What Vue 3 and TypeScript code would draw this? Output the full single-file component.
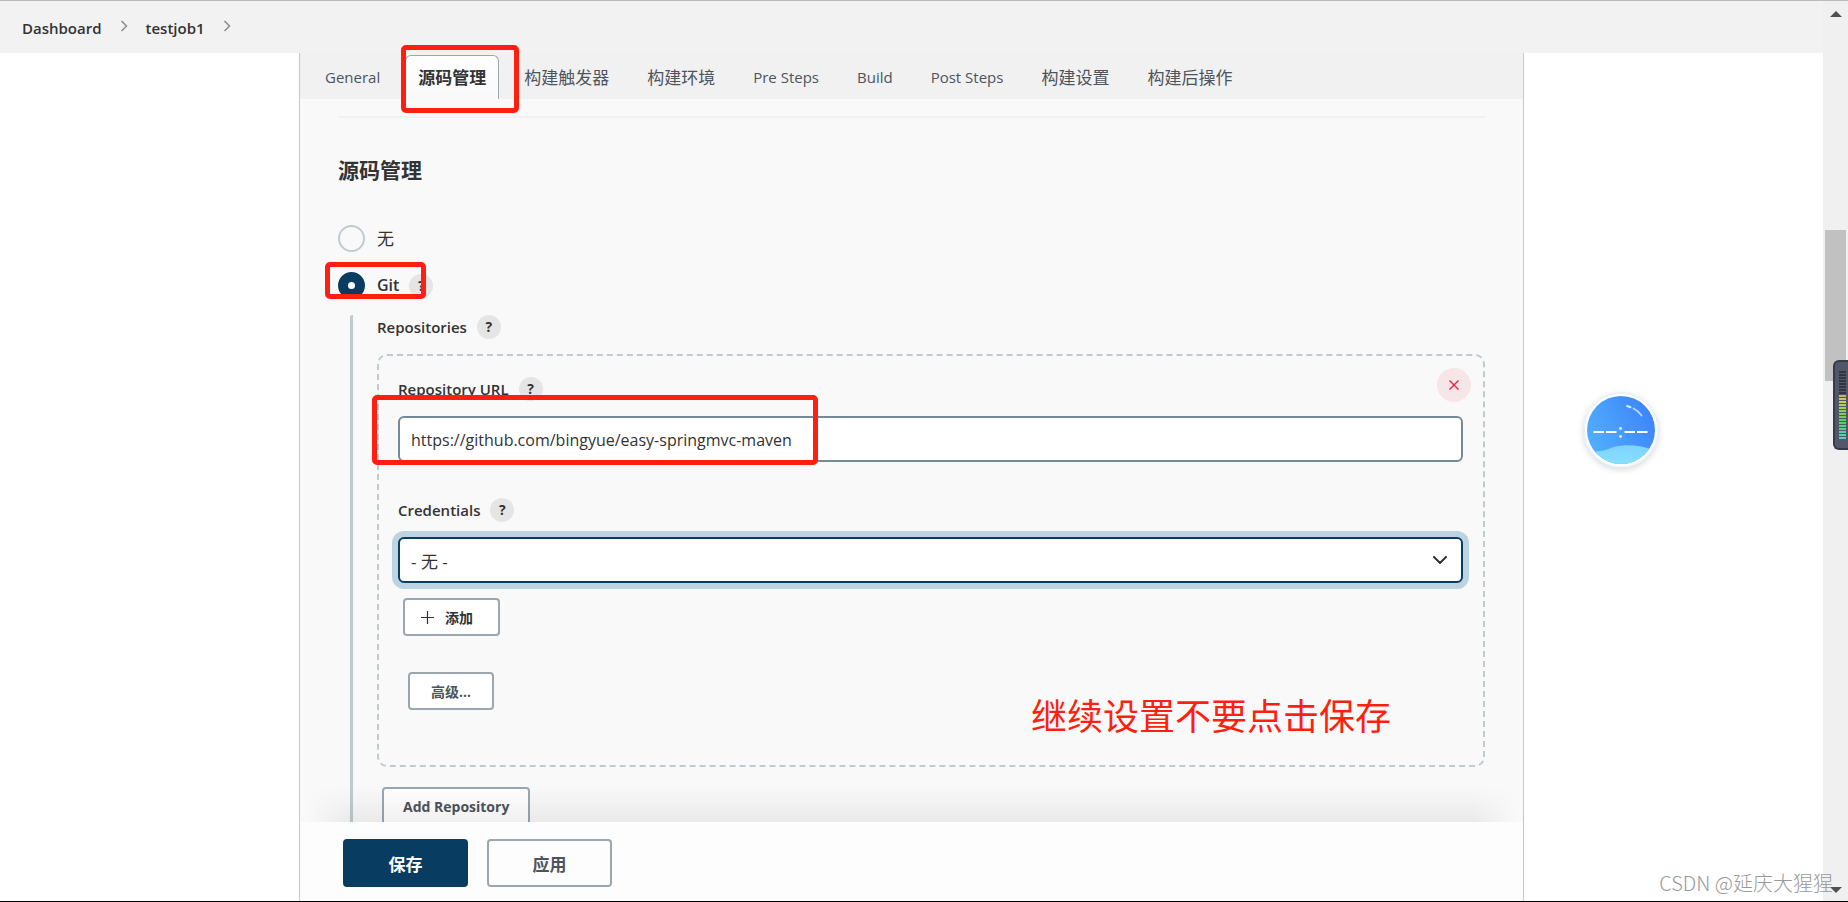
<script setup lang="ts">
import { ref } from 'vue'

interface Tab {
  label: string
  cjk: boolean
}

const tabs: Tab[] = [
  { label: 'General', cjk: false },
  { label: '源码管理', cjk: true },
  { label: '构建触发器', cjk: true },
  { label: '构建环境', cjk: true },
  { label: 'Pre Steps', cjk: false },
  { label: 'Build', cjk: false },
  { label: 'Post Steps', cjk: false },
  { label: '构建设置', cjk: true },
  { label: '构建后操作', cjk: true },
]
const activeTab = ref('源码管理')
const crumbs = ['Dashboard', 'testjob1']
const scm = ref('git')
const repositoryUrl = ref('https://github.com/bingyue/easy-springmvc-maven')
const credentials = ref('none')

const meterColor = (i: number): string =>
  i < 8 ? '#31353f' : `hsl(${46 + (i - 8) * 9}, 55%, 58%)`
const meter = Array.from({ length: 23 }, (_, i) => meterColor(i))
</script>

<template>
  <div class="screen">
    <div class="page">
      <header class="crumbs">
        <nav aria-label="Breadcrumb">
          <template v-for="c in crumbs" :key="c">
            <a href="#">{{ c }}</a>
            <svg class="crumb-arrow" viewBox="0 0 8 12" aria-hidden="true">
              <path d="M1.5 1 L6.5 6 L1.5 11" fill="none" stroke="#8c8c8c" stroke-width="1.5" />
            </svg>
          </template>
        </nav>
      </header>

      <main class="panel">
        <nav class="tabs">
          <button
            v-for="t in tabs"
            :key="t.label"
            type="button"
            class="tab"
            :class="{ cjk: t.cjk, active: t.label === activeTab }"
            @click="activeTab = t.label"
          >{{ t.label }}</button>
        </nav>

        <form id="config" class="form" @submit.prevent>
          <hr class="rule" />
          <h2 class="title">源码管理</h2>

          <div class="radio-row">
            <input id="scm-none" v-model="scm" type="radio" name="scm" value="none" />
            <label for="scm-none" class="plain">无</label>
          </div>
          <div class="radio-row">
            <input id="scm-git" v-model="scm" type="radio" name="scm" value="git" />
            <label for="scm-git">Git</label>
            <button type="button" class="help" aria-label="Help">?</button>
          </div>

          <div class="nested">
            <div class="label-row">
              <span>Repositories</span>
              <button type="button" class="help" aria-label="Help">?</button>
            </div>

            <div class="repo">
              <button type="button" class="remove" aria-label="Remove">
                <svg viewBox="0 0 10 10" aria-hidden="true">
                  <path d="M0.5 0.5 L9.5 9.5 M9.5 0.5 L0.5 9.5" stroke="#e6213f" stroke-width="1.4" />
                </svg>
              </button>
              <div class="label-row">
                <label for="repo-url">Repository URL</label>
                <button type="button" class="help" aria-label="Help">?</button>
              </div>
              <input id="repo-url" v-model="repositoryUrl" class="field" type="text" />

              <div class="label-row spaced">
                <label for="cred">Credentials</label>
                <button type="button" class="help" aria-label="Help">?</button>
              </div>
              <div class="select-wrap">
                <select id="cred" v-model="credentials" class="field focused">
                  <option value="none">- 无 -</option>
                </select>
                <svg class="chevron" viewBox="0 0 14 8" aria-hidden="true">
                  <path d="M1 1 L7 7 L13 1" fill="none" stroke="#333" stroke-width="2" stroke-linecap="round" stroke-linejoin="round" />
                </svg>
              </div>

              <button type="button" class="btn add">
                <svg viewBox="0 0 13 13" aria-hidden="true">
                  <path d="M6.5 0 V13 M0 6.5 H13" stroke="#333" stroke-width="1.2" />
                </svg>
                添加
              </button>
              <button type="button" class="btn advanced">高级...</button>
            </div>

            <button type="button" class="btn add-repo">Add Repository</button>
          </div>
        </form>

        <footer class="actions">
          <button type="submit" form="config" class="big primary">保存</button>
          <button type="button" class="big">应用</button>
        </footer>

        <div class="mark mark-tab"></div>
        <div class="mark mark-git"></div>
        <div class="mark mark-url"></div>
        <p class="note">继续设置不要点击保存</p>
      </main>
    </div>

    <div class="scrollbar" aria-hidden="true">
      <svg class="arrow" viewBox="0 0 12 6"><path d="M0 6 L6 0 L12 6 Z" fill="#505050" /></svg>
      <div class="track"><div class="thumb"></div></div>
      <svg class="arrow" viewBox="0 0 12 6"><path d="M0 0 L6 6 L12 0 Z" fill="#505050" /></svg>
    </div>

    <svg class="ball" viewBox="0 0 88 88" aria-hidden="true">
      <defs>
        <linearGradient id="sky" x1="0" y1="0.7" x2="1" y2="0.2">
          <stop offset="0" stop-color="#53b0fc" />
          <stop offset="1" stop-color="#3b82fb" />
        </linearGradient>
        <linearGradient id="sea" x1="0" y1="0" x2="0" y2="1">
          <stop offset="0" stop-color="#7ed4ff" />
          <stop offset="1" stop-color="#8fe6ff" />
        </linearGradient>
        <clipPath id="disc"><circle cx="44" cy="44" r="34" /></clipPath>
      </defs>
      <circle class="ball-ring" cx="44" cy="44" r="37" fill="#fff" stroke="#e6f2fb" stroke-width="1.5" />
      <circle cx="44" cy="44" r="34" fill="url(#sky)" />
      <path d="M8 64 C18 68 29 64 37 61 C48 58 62 59 74 63 L82 90 L8 90 Z" fill="url(#sea)" clip-path="url(#disc)" />
      <path d="M16.500 46 H27 M29 46 H39.500 M47.500 46 H58 M60 46 H70.500" stroke="#fff" stroke-width="2" />
      <circle cx="43.500" cy="42.500" r="1.400" fill="#e8f4ff" />
      <circle cx="43.500" cy="50.500" r="1.400" fill="#e8f4ff" />
      <path d="M50 20 L53.500 21.200" stroke="#d3ecff" stroke-width="2" stroke-linecap="round" />
      <path d="M56.500 22.500 Q61.500 25 64.500 29.500" stroke="#b7dcff" stroke-width="1.800" fill="none" stroke-linecap="round" />
    </svg>

    <div class="meter" aria-hidden="true">
      <i v-for="(c, i) in meter" :key="i" :style="{ background: c }"></i>
    </div>

    <p class="watermark">CSDN @延庆大猩猩</p>
  </div>
</template>

<style>
body {
  margin: 0;
}
</style>

<style scoped>
* {
  box-sizing: border-box;
}

.screen {
  position: relative;
  display: flex;
  height: 100vh;
  overflow: hidden;
  border-top: 1px solid #bbb;
  border-bottom: 1px solid #000;
  background: #fff;
  color: #333;
  font-family: "Open Sans", "Noto Sans CJK SC", sans-serif;
  font-size: 16px;
}

button,
input,
select {
  margin: 0;
  color: inherit;
  font-family: inherit;
}

.page {
  flex: 1;
  min-width: 0;
  display: flex;
  flex-direction: column;
}

.crumbs {
  flex: none;
  height: 52px;
  background: #f2f2f2;
}

.crumbs nav {
  display: flex;
  align-items: center;
  gap: 18px;
  height: 52px;
  padding: 2px 22px 0;
}

.crumbs a {
  color: #333;
  font-size: 15px;
  font-weight: 600;
  line-height: 24px;
  text-decoration: none;
}

.crumb-arrow {
  width: 8px;
  height: 12px;
  margin-bottom: 4px;
}

.panel {
  position: relative;
  flex: 1;
  min-height: 0;
  display: flex;
  flex-direction: column;
  width: 100%;
  max-width: 1225px;
  margin: 0 auto;
  border: solid #c0cbd0;
  border-width: 0 1px;
  background: #f9f9f9;
}

.tabs {
  flex: none;
  display: flex;
  align-items: flex-end;
  gap: 12px;
  height: 46px;
  padding: 0 12px;
  background: #f1f1f1;
}

.tab {
  height: 44px;
  padding: 0 12px 2px;
  border: 1px solid transparent;
  border-bottom: 0;
  border-radius: 6px 6px 0 0;
  background: none;
  color: #4d545d;
  font-size: 15px;
  line-height: 24px;
  white-space: nowrap;
}

.tab.cjk {
  font-family: "Noto Sans CJK SC", sans-serif;
  font-size: 17px;
}

.tab.active {
  border-color: #9aa7b0;
  background: linear-gradient(#fff, #f9f9f9);
  color: #333;
  font-weight: 700;
}

.form {
  flex: 1;
  min-height: 0;
  overflow: hidden;
  padding: 17px 38px 0;
}

.rule {
  height: 2px;
  margin: 0;
  border: 0;
  background: #f1f1f1;
}

.title {
  margin: 38px 0 41px;
  font-size: 21px;
  font-weight: 700;
  line-height: 28px;
}

.radio-row {
  display: flex;
  align-items: center;
  height: 27px;
  margin-bottom: 20px;
  font-weight: 600;
}

.radio-row label {
  padding-bottom: 2px;
}

.radio-row input {
  appearance: none;
  width: 27px;
  height: 27px;
  margin-right: 12px;
  border: 2px solid #c0cbd0;
  border-radius: 50%;
}

.radio-row input:checked {
  border: 10px solid #083d61;
  background: #fff;
}

.plain {
  font-size: 17px;
  font-weight: 400;
}

.radio-row + .nested {
  margin-top: -4px;
}

.help {
  width: 24px;
  height: 24px;
  margin-left: 10px;
  padding: 0;
  border: 0;
  border-radius: 50%;
  background: #e5e5e5;
  font-size: 14px;
  font-weight: 700;
  line-height: 24px;
  text-align: center;
}

.nested {
  margin-left: 12px;
  padding: 0 0 60px 24px;
  border-left: 3px solid #c0cbd0;
  border-top-left-radius: 2px;
}

.label-row {
  display: flex;
  align-items: center;
  height: 24px;
  margin-bottom: 15px;
  font-size: 15px;
  font-weight: 600;
}

.spaced {
  margin-top: 36px;
}

.repo {
  position: relative;
  padding: 21px 20px 55px 19px;
  border: 2px dashed #c0cbd0;
  border-radius: 10px;
}

.remove {
  position: absolute;
  top: 12px;
  right: 12px;
  display: flex;
  align-items: center;
  justify-content: center;
  width: 34px;
  height: 34px;
  padding: 0;
  border: 0;
  border-radius: 50%;
  background: #f7e6e7;
}

.remove svg {
  width: 10px;
  height: 10px;
}

.field {
  display: block;
  width: 100%;
  height: 46px;
  padding: 2px 11px 0;
  border: 2px solid #738a9b;
  border-radius: 6px;
  outline: 0;
  background: #fff;
  font-size: 16px;
}

.select-wrap {
  position: relative;
}

.field.focused {
  appearance: none;
  border-color: #083d61;
  box-shadow: 0 0 0 6px #bcd4e2;
  font-size: 17px;
}

.chevron {
  position: absolute;
  top: 19px;
  right: 16px;
  width: 14px;
  height: 8px;
  pointer-events: none;
}

.btn {
  display: flex;
  align-items: center;
  height: 38px;
  padding: 0 19px;
  border: 2px solid #9aa7b0;
  border-radius: 4px;
  background: #fff;
  color: #4d545d;
  font-size: 14px;
  font-weight: 700;
}

.btn.add {
  gap: 11px;
  margin: 15px 0 36px 5px;
  padding: 0 25px 0 16px;
  color: #333;
}

.btn.add svg {
  width: 13px;
  height: 13px;
}

.btn.advanced {
  margin-left: 10px;
  padding: 0 21px;
}

.btn.add-repo {
  margin: 20px 0 0 5px;
}

.actions {
  position: relative;
  flex: none;
  display: flex;
  gap: 19px;
  padding: 17px 43px 14px;
  background: #fdfdfd;
}

.actions::before {
  content: "";
  position: absolute;
  inset: -36px 0 100%;
  background: linear-gradient(transparent, rgba(0, 0, 0, 0.06));
  mask-image: linear-gradient(90deg, transparent 6px, #000 50px, #000 calc(100% - 50px), transparent calc(100% - 6px));
}

.big {
  width: 125px;
  height: 48px;
  padding: 0;
  border: 2px solid #9aa7b0;
  border-radius: 4px;
  background: #fdfdfd;
  color: #4d545d;
  font-size: 17px;
  font-weight: 700;
}

.big.primary {
  border-color: #083d61;
  background: #083d61;
  color: #fff;
}

.mark {
  position: absolute;
  border: 5px solid #ff1f11;
  border-radius: 5px;
  pointer-events: none;
}

.mark-tab {
  top: -8px;
  left: 101px;
  width: 118px;
  height: 68px;
}

.mark-git {
  top: 209px;
  left: 25px;
  width: 101px;
  height: 37px;
}

.mark-url {
  top: 342px;
  left: 72px;
  width: 446px;
  height: 70px;
}

.note {
  position: absolute;
  top: 636px;
  left: 731px;
  margin: 0;
  color: #ff1f11;
  font-family: "Noto Sans CJK SC", sans-serif;
  font-size: 36px;
  line-height: 50px;
  white-space: nowrap;
}

.scrollbar {
  flex: none;
  display: flex;
  flex-direction: column;
  align-items: center;
  width: 25px;
  padding: 10px 0 8px;
  background: #f0f0f0;
}

.arrow {
  flex: none;
  width: 12px;
  height: 6px;
}

.track {
  flex: 1;
  width: 21px;
  padding-top: 213px;
}

.thumb {
  height: 151px;
  background: #c1c1c1;
}

.ball {
  position: absolute;
  top: 385px;
  right: 183px;
  width: 88px;
  height: 88px;
}

.ball-ring {
  filter: drop-shadow(0 2px 3px rgba(0, 0, 0, 0.15));
}

.meter {
  position: absolute;
  top: 359px;
  right: 0;
  display: grid;
  gap: 1px;
  width: 15px;
  padding: 9px 2px 9px 4px;
  border: 2px solid #363b49;
  border-right: 0;
  border-radius: 6px 0 0 6px;
  background: #50586a;
}

.meter i {
  height: 2px;
}

.watermark {
  position: absolute;
  right: 15px;
  bottom: 3px;
  margin: 0;
  color: #999;
  font-family: "Noto Sans CJK SC", sans-serif;
  font-size: 20px;
  font-weight: 300;
  line-height: 30px;
}
</style>
